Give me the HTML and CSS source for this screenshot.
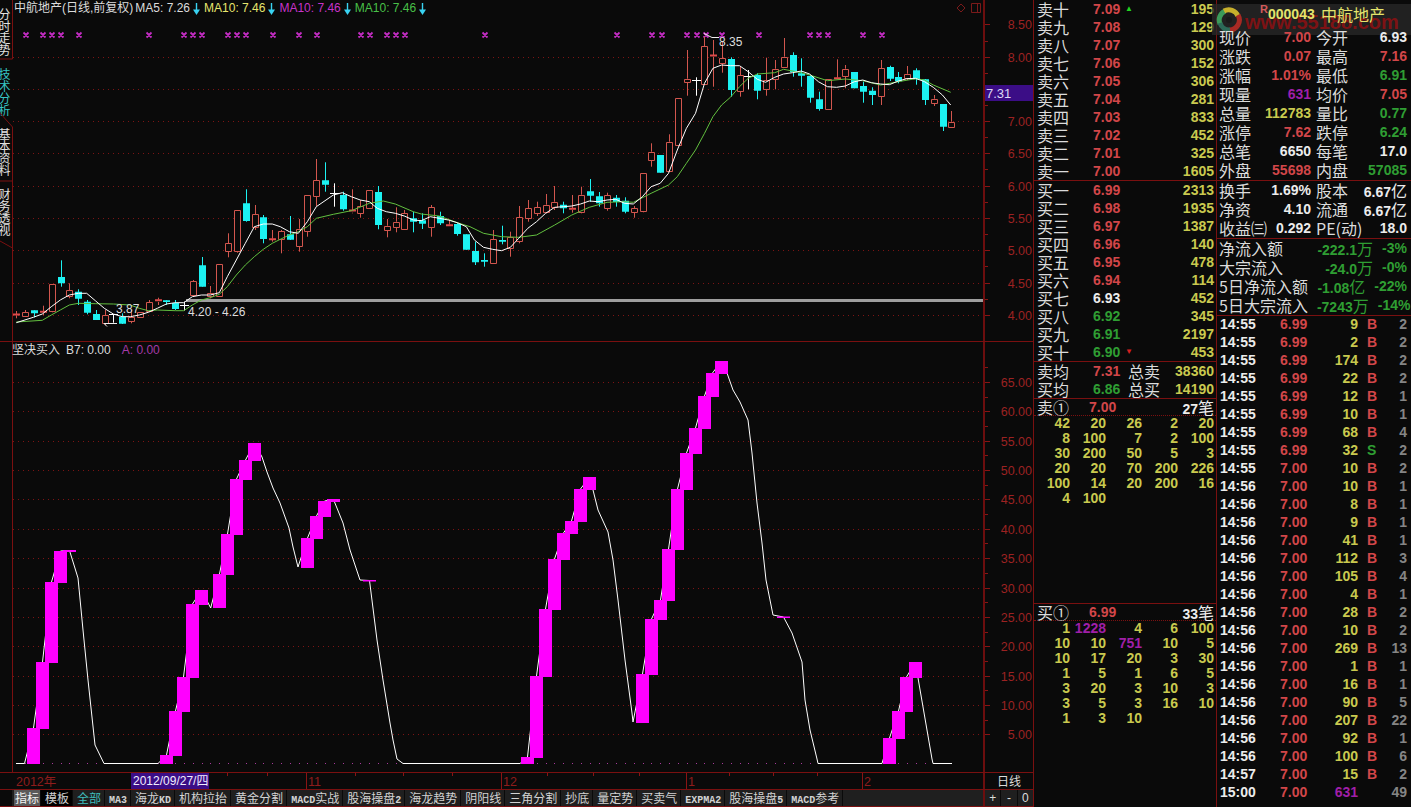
FILE: index.html
```html
<!DOCTYPE html>
<html lang="zh-CN">
<head>
<meta charset="utf-8">
<title>中航地产 日线</title>
<link rel="stylesheet" href="styles.css">
</head>
<body>
<div class="app">
  <section class="charts">
    <div class="chart-row upper">
      <nav class="side-tabs">
        <svg class="side-lines" width="13" height="341" viewBox="0 0 13 341"><path d="M12.5 0V59H0M12.5 127L0 113M12.5 127V341M12.5 181H0M12.5 248L0 241"/></svg>
        <div class="side-tab">分时走势</div>
        <div class="side-tab active">技术分析</div>
        <div class="side-tab">基本资料</div>
        <div class="side-tab">财务透视</div>
      </nav>
      <div class="plot">
        <svg id="upper-plot" class="chart-svg" width="971" height="341" viewBox="12 0 971 341">
          <text class="note" x="116" y="313">3.87</text>
          <text class="note" x="188" y="316">4.20 - 4.26</text>
          <text class="note" x="719" y="46">8.35</text>
          <path class="icon-line" d="M961 4l4 4-4 4-4-4zM971.5 3.5h9v9h-9zM977.5 3.5v9"/>
        </svg>
        <div class="legend">
          <span class="legend-title">中航地产(日线,前复权)</span>
          <span class="legend-item c-white">MA5: 7.26<svg class="down" width="7" height="13" viewBox="0 0 7 13"><path d="M3.5 1v7"/><path class="head" d="M0 7.5h7L3.5 13z"/></svg></span>
          <span class="legend-item c-yellow">MA10: 7.46<svg class="down" width="7" height="13" viewBox="0 0 7 13"><path d="M3.5 1v7"/><path class="head" d="M0 7.5h7L3.5 13z"/></svg></span>
          <span class="legend-item c-magenta">MA10: 7.46<svg class="down" width="7" height="13" viewBox="0 0 7 13"><path d="M3.5 1v7"/><path class="head" d="M0 7.5h7L3.5 13z"/></svg></span>
          <span class="legend-item c-green">MA10: 7.46<svg class="down" width="7" height="13" viewBox="0 0 7 13"><path d="M3.5 1v7"/><path class="head" d="M0 7.5h7L3.5 13z"/></svg></span>
        </div>
      </div>
      <div class="axis">
        <svg width="48" height="341" viewBox="985 0 48 341">
          <path class="tick" d="M985 24.5h5M985 57.5h5M985 89.5h5M985 121.5h5M985 153.5h5M985 186.5h5M985 218.5h5M985 250.5h5M985 283.5h5M985 315.5h5M985 41.5h3M985 73.5h3M985 105.5h3M985 137.5h3M985 169.5h3M985 202.5h3M985 234.5h3M985 266.5h3M985 299.5h3"/>
          <rect class="price-box" x="985" y="85" width="48" height="16"/>
          <text class="price-text" x="986" y="98">7.31</text>
          <text class="axis-label" x="1032" y="29">8.50</text>
          <text class="axis-label" x="1032" y="62">8.00</text>
          <text class="axis-label" x="1032" y="126">7.00</text>
          <text class="axis-label" x="1032" y="158">6.50</text>
          <text class="axis-label" x="1032" y="191">6.00</text>
          <text class="axis-label" x="1032" y="223">5.50</text>
          <text class="axis-label" x="1032" y="255">5.00</text>
          <text class="axis-label" x="1032" y="288">4.50</text>
          <text class="axis-label" x="1032" y="320">4.00</text>
        </svg>
      </div>
    </div>

    <div class="chart-row lower">
      <div class="strip"></div>
      <div class="plot plot-lower">
        <svg id="lower-plot" class="chart-svg" width="970" height="430" viewBox="13 342 970 430"></svg>
        <div class="legend legend-lower">
          <span class="legend-title">坚决买入</span>
          <span class="legend-item c-white">B7: 0.00</span>
          <span class="legend-item c-purple">A: 0.00</span>
        </div>
      </div>
      <div class="axis">
        <svg id="lower-axis" width="48" height="430" viewBox="985 342 48 430">
          <text class="axis-label" x="1032" y="387">65.00</text>
          <text class="axis-label" x="1032" y="416">60.00</text>
          <text class="axis-label" x="1032" y="446">55.00</text>
          <text class="axis-label" x="1032" y="475">50.00</text>
          <text class="axis-label" x="1032" y="504">45.00</text>
          <text class="axis-label" x="1032" y="534">40.00</text>
          <text class="axis-label" x="1032" y="563">35.00</text>
          <text class="axis-label" x="1032" y="593">30.00</text>
          <text class="axis-label" x="1032" y="622">25.00</text>
          <text class="axis-label" x="1032" y="651">20.00</text>
          <text class="axis-label" x="1032" y="681">15.00</text>
          <text class="axis-label" x="1032" y="710">10.00</text>
          <text class="axis-label" x="1032" y="739">5.00</text>
        </svg>
      </div>
    </div>

    <div class="chart-row date-row">
      <div class="strip"></div>
      <svg class="date-svg" width="971" height="16" viewBox="12 773 971 16">
        <path class="tick" d="M227.5 773v3M267.5 773v3M355.5 773v3M403.5 773v3M452.5 773v3M547.5 773v3M593.5 773v3M639.5 773v3M729.5 773v3M773.5 773v3M817.5 773v3M306.5 773v16M501.5 773v16M686.5 773v16M862.5 773v16"/>
        <rect class="price-box" x="131" y="773" width="78" height="16"/>
        <text class="date-label" x="16" y="786">2012年</text>
        <text class="date-now" x="133" y="785">2012/09/27/四</text>
        <text class="date-label" x="308" y="786">11</text>
        <text class="date-label" x="503" y="786">12</text>
        <text class="date-label" x="688" y="786">1</text>
        <text class="date-label" x="864" y="786">2</text>
      </svg>
      <div class="period">日线</div>
    </div>

    <div class="chart-row tab-row">
      <div class="strip strip-plain"></div>
      <div class="tabs">
        <span class="tab tab-on">指标</span>
        <span class="tab tab-dark">模板</span>
        <span class="tab tab-all">全部</span>
        <span class="tab"><i>MA3</i></span>
        <span class="tab">海龙<i>KD</i></span>
        <span class="tab">机构拉抬</span>
        <span class="tab">黄金分割</span>
        <span class="tab"><i>MACD</i>实战</span>
        <span class="tab">股海操盘<i>2</i></span>
        <span class="tab">海龙趋势</span>
        <span class="tab">阴阳线</span>
        <span class="tab">三角分割</span>
        <span class="tab">抄底</span>
        <span class="tab">量定势</span>
        <span class="tab">买卖气</span>
        <span class="tab"><i>EXPMA2</i></span>
        <span class="tab">股海操盘<i>5</i></span>
        <span class="tab"><i>MACD</i>参考</span>
      </div>
      <div class="zoom-btns"><span>+</span><span>-</span><span>0</span></div>
    </div>
  </section>

  <section class="book">
    <div class="book-block">
      <div class="book-row"><span class="zh">卖十</span><b class="r">7.09</b><span class="mark up">▲</span><b class="y num">195</b></div>
      <div class="book-row"><span class="zh">卖九</span><b class="r">7.08</b><span></span><b class="y num">129</b></div>
      <div class="book-row"><span class="zh">卖八</span><b class="r">7.07</b><span></span><b class="y num">300</b></div>
      <div class="book-row"><span class="zh">卖七</span><b class="r">7.06</b><span></span><b class="y num">152</b></div>
      <div class="book-row"><span class="zh">卖六</span><b class="r">7.05</b><span></span><b class="y num">306</b></div>
      <div class="book-row"><span class="zh">卖五</span><b class="r">7.04</b><span></span><b class="y num">281</b></div>
      <div class="book-row"><span class="zh">卖四</span><b class="r">7.03</b><span></span><b class="y num">833</b></div>
      <div class="book-row"><span class="zh">卖三</span><b class="r">7.02</b><span></span><b class="y num">452</b></div>
      <div class="book-row"><span class="zh">卖二</span><b class="r">7.01</b><span></span><b class="y num">325</b></div>
      <div class="book-row"><span class="zh">卖一</span><b class="r">7.00</b><span></span><b class="y num">1605</b></div>
    </div>
    <div class="book-block">
      <div class="book-row"><span class="zh">买一</span><b class="r">6.99</b><span></span><b class="y num">2313</b></div>
      <div class="book-row"><span class="zh">买二</span><b class="r">6.98</b><span></span><b class="y num">1935</b></div>
      <div class="book-row"><span class="zh">买三</span><b class="r">6.97</b><span></span><b class="y num">1387</b></div>
      <div class="book-row"><span class="zh">买四</span><b class="r">6.96</b><span></span><b class="y num">140</b></div>
      <div class="book-row"><span class="zh">买五</span><b class="r">6.95</b><span></span><b class="y num">478</b></div>
      <div class="book-row"><span class="zh">买六</span><b class="r">6.94</b><span></span><b class="y num">114</b></div>
      <div class="book-row"><span class="zh">买七</span><b class="w">6.93</b><span></span><b class="y num">452</b></div>
      <div class="book-row"><span class="zh">买八</span><b class="g">6.92</b><span></span><b class="y num">345</b></div>
      <div class="book-row"><span class="zh">买九</span><b class="g">6.91</b><span></span><b class="y num">2197</b></div>
      <div class="book-row"><span class="zh">买十</span><b class="g">6.90</b><span class="mark dn">▼</span><b class="y num">453</b></div>
    </div>
    <div class="book-block">
      <div class="avg-row"><span class="zh">卖均</span><b class="r">7.31</b><span class="zh">总卖</span><b class="y num">38360</b></div>
      <div class="avg-row"><span class="zh">买均</span><b class="g">6.86</b><span class="zh">总买</span><b class="y num">14190</b></div>
    </div>
    <div class="queue queue-sell">
      <div class="queue-head"><span class="zh">卖①</span><b class="r">7.00</b><b class="w num">27<span class="zh">笔</span></b></div>
      <div class="queue-grid y">
        <b>42</b><b>20</b><b>26</b><b>2</b><b>20</b>
        <b>8</b><b>100</b><b>7</b><b>2</b><b>100</b>
        <b>30</b><b>200</b><b>50</b><b>5</b><b>3</b>
        <b>20</b><b>20</b><b>70</b><b>200</b><b>226</b>
        <b>100</b><b>14</b><b>20</b><b>200</b><b>16</b>
        <b>4</b><b>100</b>
      </div>
    </div>
    <div class="queue queue-buy">
      <div class="queue-head"><span class="zh">买①</span><b class="r">6.99</b><b class="w num">33<span class="zh">笔</span></b></div>
      <div class="queue-grid y">
        <b>1</b><b class="p">1228</b><b>4</b><b>6</b><b>100</b>
        <b>10</b><b>10</b><b class="p">751</b><b>10</b><b>5</b>
        <b>10</b><b>17</b><b>20</b><b>3</b><b>30</b>
        <b>1</b><b>5</b><b>1</b><b>6</b><b>5</b>
        <b>3</b><b>20</b><b>3</b><b>10</b><b>3</b>
        <b>3</b><b>5</b><b>3</b><b>16</b><b>10</b>
        <b>1</b><b>3</b><b>10</b>
      </div>
    </div>
  </section>

  <section class="quote">
    <div class="watermark">
      <svg class="logo" width="26" height="26" viewBox="0 0 26 26"><path class="logo-g" d="M4 17A10 10 0 0 1 9 4"/><path class="logo-y" d="M8 4A10 10 0 0 1 22 9"/><path class="logo-r" d="M22 8A10 10 0 0 1 13 23"/><path class="logo-g2" d="M14 23A10 10 0 0 1 4 16"/><circle class="logo-c" cx="13" cy="13" r="3"/></svg>
      <span class="mark-text">www.55188.com</span>
    </div>
    <div class="quote-head"><span class="r-flag">R</span><b class="code">000043</b><span class="zh name">中航地产</span></div>
    <div class="quote-block">
      <div class="q-row"><span class="zh">现价</span><b class="r">7.00</b><span class="zh">今开</span><b class="w">6.93</b></div>
      <div class="q-row"><span class="zh">涨跌</span><b class="r">0.07</b><span class="zh">最高</span><b class="r">7.16</b></div>
      <div class="q-row"><span class="zh">涨幅</span><b class="r">1.01%</b><span class="zh">最低</span><b class="g">6.91</b></div>
      <div class="q-row"><span class="zh">现量</span><b class="p">631</b><span class="zh">均价</span><b class="r">7.05</b></div>
      <div class="q-row"><span class="zh">总量</span><b class="y">112783</b><span class="zh">量比</span><b class="g">0.77</b></div>
      <div class="q-row"><span class="zh">涨停</span><b class="r">7.62</b><span class="zh">跌停</span><b class="g">6.24</b></div>
      <div class="q-row"><span class="zh">总笔</span><b class="w">6650</b><span class="zh">每笔</span><b class="w">17.0</b></div>
      <div class="q-row"><span class="zh">外盘</span><b class="r">55698</b><span class="zh">内盘</span><b class="g">57085</b></div>
    </div>
    <div class="quote-block">
      <div class="q-row"><span class="zh">换手</span><b class="w">1.69%</b><span class="zh">股本</span><b class="w">6.67<span class="zh">亿</span></b></div>
      <div class="q-row"><span class="zh">净资</span><b class="w">4.10</b><span class="zh">流通</span><b class="w">6.67<span class="zh">亿</span></b></div>
      <div class="q-row"><span class="zh">收益㈢</span><b class="w">0.292</b><span class="zh">PE(动)</span><b class="w">18.0</b></div>
    </div>
    <div class="quote-block">
      <div class="flow-row"><span class="zh">净流入额</span><b class="g">-222.1<span class="zh">万</span></b><b class="g">-3%</b></div>
      <div class="flow-row"><span class="zh">大宗流入</span><b class="g">-24.0<span class="zh">万</span></b><b class="g">-0%</b></div>
      <div class="flow-row"><span class="zh">5日净流入额</span><b class="g">-1.08<span class="zh">亿</span></b><b class="g">-22%</b></div>
      <div class="flow-row"><span class="zh">5日大宗流入</span><b class="g">-7243<span class="zh">万</span></b><b class="g">-14%</b></div>
    </div>
    <div class="trades">
      <div class="t-row"><b class="w">14:55</b><b class="r">6.99</b><b class="y num">9</b><b class="r side">B</b><b class="n num">2</b></div>
      <div class="t-row"><b class="w">14:55</b><b class="r">6.99</b><b class="y num">2</b><b class="r side">B</b><b class="n num">2</b></div>
      <div class="t-row"><b class="w">14:55</b><b class="r">6.99</b><b class="y num">174</b><b class="r side">B</b><b class="n num">2</b></div>
      <div class="t-row"><b class="w">14:55</b><b class="r">6.99</b><b class="y num">22</b><b class="r side">B</b><b class="n num">2</b></div>
      <div class="t-row"><b class="w">14:55</b><b class="r">6.99</b><b class="y num">12</b><b class="r side">B</b><b class="n num">1</b></div>
      <div class="t-row"><b class="w">14:55</b><b class="r">6.99</b><b class="y num">10</b><b class="r side">B</b><b class="n num">1</b></div>
      <div class="t-row"><b class="w">14:55</b><b class="r">6.99</b><b class="y num">68</b><b class="r side">B</b><b class="n num">4</b></div>
      <div class="t-row"><b class="w">14:55</b><b class="r">6.99</b><b class="y num">32</b><b class="g side">S</b><b class="n num">2</b></div>
      <div class="t-row"><b class="w">14:55</b><b class="r">7.00</b><b class="y num">10</b><b class="r side">B</b><b class="n num">2</b></div>
      <div class="t-row"><b class="w">14:56</b><b class="r">7.00</b><b class="y num">10</b><b class="r side">B</b><b class="n num">1</b></div>
      <div class="t-row"><b class="w">14:56</b><b class="r">7.00</b><b class="y num">8</b><b class="r side">B</b><b class="n num">1</b></div>
      <div class="t-row"><b class="w">14:56</b><b class="r">7.00</b><b class="y num">9</b><b class="r side">B</b><b class="n num">1</b></div>
      <div class="t-row"><b class="w">14:56</b><b class="r">7.00</b><b class="y num">41</b><b class="r side">B</b><b class="n num">1</b></div>
      <div class="t-row"><b class="w">14:56</b><b class="r">7.00</b><b class="y num">112</b><b class="r side">B</b><b class="n num">3</b></div>
      <div class="t-row"><b class="w">14:56</b><b class="r">7.00</b><b class="y num">105</b><b class="r side">B</b><b class="n num">4</b></div>
      <div class="t-row"><b class="w">14:56</b><b class="r">7.00</b><b class="y num">4</b><b class="r side">B</b><b class="n num">1</b></div>
      <div class="t-row"><b class="w">14:56</b><b class="r">7.00</b><b class="y num">28</b><b class="r side">B</b><b class="n num">2</b></div>
      <div class="t-row"><b class="w">14:56</b><b class="r">7.00</b><b class="y num">10</b><b class="r side">B</b><b class="n num">2</b></div>
      <div class="t-row"><b class="w">14:56</b><b class="r">7.00</b><b class="y num">269</b><b class="r side">B</b><b class="n num">13</b></div>
      <div class="t-row"><b class="w">14:56</b><b class="r">7.00</b><b class="y num">1</b><b class="r side">B</b><b class="n num">1</b></div>
      <div class="t-row"><b class="w">14:56</b><b class="r">7.00</b><b class="y num">16</b><b class="r side">B</b><b class="n num">1</b></div>
      <div class="t-row"><b class="w">14:56</b><b class="r">7.00</b><b class="y num">90</b><b class="r side">B</b><b class="n num">5</b></div>
      <div class="t-row"><b class="w">14:56</b><b class="r">7.00</b><b class="y num">207</b><b class="r side">B</b><b class="n num">22</b></div>
      <div class="t-row"><b class="w">14:56</b><b class="r">7.00</b><b class="y num">92</b><b class="r side">B</b><b class="n num">1</b></div>
      <div class="t-row"><b class="w">14:56</b><b class="r">7.00</b><b class="y num">100</b><b class="r side">B</b><b class="n num">6</b></div>
      <div class="t-row"><b class="w">14:57</b><b class="r">7.00</b><b class="y num">15</b><b class="r side">B</b><b class="n num">2</b></div>
      <div class="t-row"><b class="w">15:00</b><b class="r">7.00</b><b class="p num">631</b><b class="side"></b><b class="n num">49</b></div>
    </div>
  </section>
</div>
<script src="chart.js"></script>
</body>
</html>
```
FILE: styles.css
```css
* { box-sizing: border-box; }
html, body { margin: 0; height: 100%; background: #0a0a0a; overflow: hidden; }
body {
  font-family: "Liberation Sans", "Noto Sans CJK SC", sans-serif;
  color: #e4e4e4;
  font-size: 14px;
}
b { font-weight: 700; }
.app {
  display: grid;
  grid-template-columns: 1033px 184px 194px;
  width: 1411px;
  height: 807px;
}

/* colours */
.r { color: #d24649; }
.y { color: #c9c94f; }
.g { color: #2f9e33; }
.w { color: #ececec; }
.p { color: #a01fa8; }
.n { color: #858585; }
.c-white { color: #dcdcdc; }
.c-yellow { color: #e6e66e; }
.c-magenta { color: #c733c9; }
.c-green { color: #48c048; }
.c-purple { color: #a43aa8; }
.zh {
  font-family: "Noto Sans CJK SC", sans-serif;
  font-size: 16px;
  font-weight: 400;
  color: #dcdcdc;
}
b .zh { color: inherit; }
.num { text-align: right; }

/* chart column */
.chart-row { display: grid; grid-template-columns: 12px 971px 50px; }
.upper { height: 341px; }
.lower { height: 432px; border-top: 1px solid #7a1010; border-bottom: 1px solid #7a1010; }
.date-row { height: 17px; border-bottom: 1px solid #7a1010; }
.tab-row { height: 17px; border-bottom: 1px solid #7a1010; }
.plot { position: relative; }
.plot-lower { border-left: 1px solid #7a1010; }
.chart-svg { display: block; }
.axis { border-left: 2px solid #6c0e0e; }
.axis svg { display: block; }

/* side tabs */
.side-tabs {
  position: relative;
  display: flex;
  flex-direction: column;
  gap: 12px;
  padding-top: 8px;
  overflow: visible;
}
.side-lines { position: absolute; left: 0; top: 0; }
.side-lines path { fill: none; stroke: #7a1010; stroke-width: 1; }
.side-tab {
  height: 48px;
  width: 12px;
  margin-left: -2px;
  font-size: 12px;
  line-height: 12px;
  writing-mode: vertical-rl;
  font-family: "Noto Sans CJK SC", sans-serif;
  color: #e2e2e2;
}
.side-tab.active { color: #36c5c5; }

/* legends */
.legend {
  position: absolute;
  left: 2px;
  top: 0;
  display: flex;
  gap: 4px;
  font-size: 12px;
  line-height: 16px;
  white-space: nowrap;
}
.legend-title { margin-right: -2px; color: #dcdcdc; }
.legend-item { display: inline-flex; }
.legend-lower { left: -1px; top: 0; gap: 7px; }
.legend-lower .legend-title { margin-right: -1px; }
.legend-lower .c-purple { margin-left: 4px; }
.down { margin: 2px 0 0 3px; }
.down path { fill: none; stroke: #39d3f2; stroke-width: 1.4; }
.down .head { fill: #39d3f2; stroke: none; }

/* svg parts */
.grid-line { stroke: #7d1414; stroke-width: 1; stroke-dasharray: 1 4; fill: none; }
.tick { stroke: #8a1414; stroke-width: 1; fill: none; }
.icon-line { stroke: #7a1a1a; stroke-width: 1; fill: none; }
.axis-label { font-size: 12.5px; fill: #9c2222; text-anchor: end; }
.price-box { fill: #3b0d86; }
.price-text { font-size: 13px; fill: #dcd8f4; }
.note { font-size: 12px; fill: #dddddd; }
.date-label { font-size: 12.5px; fill: #8e1c1c; }
.date-now { font-size: 12px; fill: #f0eeff; }
.candle-r { fill: #0a0a0a; stroke: #d2564e; stroke-width: 1; }
.wick-r { fill: none; stroke: #d2564e; stroke-width: 1; }
.solid-r { fill: #e04a4a; }
.candle-c { fill: #1cf2f2; }
.wick-c { fill: none; stroke: #1cf2f2; stroke-width: 1; }
.wick-w { fill: none; stroke: #ffffff; stroke-width: 1; }
.ma5 { fill: none; stroke: #ffffff; stroke-width: 1; stroke-linejoin: round; }
.ma10 { fill: none; stroke: #62bf3f; stroke-width: 1; stroke-linejoin: round; }
.level { fill: #9e9e9e; }
.mark-x { fill: none; stroke: #c22cc2; stroke-width: 1.8; }
.pointer { fill: none; stroke: #f0f0f0; stroke-width: 1; }
.bar { fill: #ff00ff; }
.flat-dot { fill: #a83a9c; }
.osc { fill: none; stroke: #ffffff; stroke-width: 1; stroke-linejoin: round; }

/* date row */
.date-svg { display: block; }
.period {
  border-left: 2px solid #6c0e0e;
  text-align: center;
  font-family: "Noto Sans CJK SC", sans-serif;
  font-size: 12px;
  line-height: 16px;
  color: #dcdcdc;
}

/* tab row */
.tabs { display: flex; background: #1f1f1f; padding-left: 2px; overflow: hidden; }
.tab {
  padding: 0 3px 0 4px;
  border-right: 1px solid #0a0a0a;
  font-family: "Noto Sans CJK SC", sans-serif;
  font-size: 12px;
  line-height: 16px;
  color: #d2d2d2;
  white-space: nowrap;
}
.tab i { font-family: "Liberation Mono", monospace; font-style: normal; font-weight: 700; font-size: 10px; }
.tab-on { background: #5a5a5a; color: #f2f2f2; padding: 0 1px; }
.tab-dark { background: #000; }
.tab-all { color: #3fbcbc; }
.zoom-btns { display: flex; gap: 1px; border-left: 2px solid #6c0e0e; background: #0a0a0a; }
.zoom-btns span { flex: 1; background: #1f1f1f; text-align: center; font-size: 12px; line-height: 16px; color: #dcdcdc; }

/* order book */
.book { display: flex; flex-direction: column; border-left: 1px solid #7a1010; border-right: 1px solid #7a1010; height: 807px; }
.book-block { border-bottom: 1px solid #7a1010; }
.book-row, .avg-row { display: grid; height: 18px; line-height: 18px; padding: 0 2px 0 3px; }
.book-row { grid-template-columns: 56px 32px 12px 1fr; }
.avg-row { grid-template-columns: 56px 35px 32px 1fr; }
.mark { font-size: 8px; line-height: 17px; }
.up { color: #22d422; }
.dn { color: #d62020; }
.queue { display: flex; flex-direction: column; }
.queue-sell { height: 205px; border-bottom: 1px solid #7a1010; }
.queue-buy { flex: 1; }
.queue-head {
  display: grid;
  grid-template-columns: 52px 1fr auto;
  height: 17px;
  line-height: 16px;
  padding: 0 2px 0 3px;
  border-bottom: 1px dotted #7a1010;
}
.queue-grid {
  display: grid;
  grid-template-columns: repeat(5, 36px);
  grid-auto-rows: 15px;
  line-height: 15px;
  text-align: right;
}

/* quote panel */
.quote { position: relative; display: flex; flex-direction: column; height: 807px; }
.watermark {
  position: absolute;
  left: -5px;
  right: 0;
  top: 4px;
  height: 31px;
  background: rgba(42, 42, 42, 0.75);
  display: flex;
  align-items: center;
  gap: 3px;
  padding: 0 0 0 4px;
}
.logo { flex: none; }
.logo path { fill: none; stroke-width: 5; }
.logo-g { stroke: #3c9a5a; }
.logo-y { stroke: #c8b02c; }
.logo-r { stroke: #a82a24; }
.logo-g2 { stroke: #2c6a58; }
.logo-c { fill: #1a1a1a; }
.mark-text { font-size: 20px; font-weight: 700; color: #7e1214; line-height: 31px; padding-top: 5px; white-space: nowrap; }
.quote-head, .quote-block, .trades { position: relative; }
.quote-head { height: 28px; display: flex; line-height: 28px; padding-left: 43px; }
.r-flag { font-size: 11px; font-weight: 700; color: #d25a5a; line-height: 18px; width: 8px; }
.code { color: #e4e46c; width: 53px; }
.zh.name { color: #e4e46c; }
.quote-block { border-bottom: 1px solid #7a1010; }
.q-row {
  display: grid;
  grid-template-columns: 34px 58px 5px 33px 58px;
  height: 19px;
  line-height: 19px;
  padding-left: 2px;
  white-space: nowrap;
}
.q-row .zh:nth-child(3) { grid-column: 4; }
.q-row b { text-align: right; }
.flow-row {
  display: grid;
  grid-template-columns: 1fr auto auto;
  column-gap: 9px;
  height: 19px;
  line-height: 19px;
  padding: 0 4px 0 2px;
  white-space: nowrap;
}
.t-row {
  display: grid;
  grid-template-columns: 60px 27px 51px 9px 14px 26px;
  height: 18px;
  line-height: 16px;
  padding-left: 3px;
}
.t-row .side { grid-column: 5; }
```
FILE: chart.js
```js
// Daily candles, moving averages and the oscillator, drawn from sampled chart data.
var NS = 'http://www.w3.org/2000/svg';
function add(svg, before, tag, cls, attrs) {
  var el = document.createElementNS(NS, tag);
  el.setAttribute('class', cls);
  for (var k in attrs) el.setAttribute(k, attrs[k]);
  svg.insertBefore(el, before);
}

var upper = document.getElementById('upper-plot');
var lower = document.getElementById('lower-plot');
var lowerAxis = document.getElementById('lower-axis');

// y values sampled at 3x scale: [kind, wickTop, bodyTop, bodyBottom, wickBottom]
var candles = [
['r',933,942,946,955],['r',930,937,947,950],['c',931,931,940,952],['r',917,934,940,945],['r',853,853,933,937],
['c',781,831,850,860],['r',850,871,888,895],['c',868,875,896,915],['c',900,905,938,943],['c',930,942,960,960],
['r',930,946,968,975],['w',942,942,942,968],['c',940,950,971,972],['r',930,950,963,970],['r',936,936,950,950],
['r',900,907,932,932],['r',893,899,906,915],['c',901,901,906,915],['c',900,909,927,930],['w',905,915,915,932],
['r',840,844,885,890],['c',771,796,860,860],['r',858,878,887,895],['r',793,793,887,887],['r',700,730,752,772],
['r',631,631,752,758],['c',568,610,663,665],['r',615,643,682,690],['c',645,652,717,730],['r',690,716,720,725],
['r',690,694,716,760],['c',648,703,719,720],['r',657,686,737,755],['r',584,584,694,710],['r',477,541,589,618],
['c',487,541,554,575],['w',550,578,578,620],['c',575,585,628,632],['r',568,630,638,640],['r',600,618,640,653],
['r',571,571,623,623],['c',558,576,675,688],['r',657,677,691,712],['r',622,665,682,697],['r',630,640,686,687],
['c',635,655,665,697],['c',640,661,671,687],['r',615,622,680,710],['c',635,648,670,675],['r',660,674,677,678],
['c',668,672,702,707],['c',703,703,749,749],['c',725,753,787,795],['c',760,780,785,800],['r',690,718,790,792],
['c',677,720,725,733],['r',695,712,745,770],['r',618,652,722,730],['r',600,625,655,665],['r',605,622,638,648],
['r',582,614,635,640],['r',558,605,622,630],['c',605,614,625,640],['r',585,625,630,638],['r',560,584,635,640],
['c',537,574,587,605],['c',576,589,610,620],['r',578,586,623,632],['c',585,593,606,620],['c',592,602,635,640],
['r',618,625,636,653],['r',518,518,632,637],['r',430,455,480,500],['c',465,465,518,518],['r',403,425,512,515],
['r',295,295,434,434],['r',150,236,247,287],['w',232,240,240,287],['r',110,139,253,255],['r',120,165,170,260],
['r',125,175,190,218],['c',172,177,270,290],['r',200,226,272,290],['w',210,228,228,268],['c',220,225,272,298],
['r',173,240,268,287],['r',180,206,238,268],['r',114,170,200,200],['c',157,165,217,230],['c',175,220,227,260],
['c',225,228,293,308],['c',275,298,327,332],['r',238,238,328,328],['r',178,233,240,240],['r',195,206,228,265],
['c',216,216,265,265],['c',245,258,275,308],['c',262,272,285,315],['r',180,205,288,315],['c',197,201,236,243],
['c',216,231,244,250],['r',198,221,235,240],['c',205,211,238,254],['c',237,238,300,315],['r',285,296,309,318],
['c',312,312,380,393],['r',333,365,380,383]
];

function cx(i) { return 16.4 + 8.82 * i; }
function px(v) { return (v / 3).toFixed(1); }

// grid
var gridD = '';
[57.5, 89.5, 121.5, 153.5, 186.5, 218.5, 250.5, 283.5, 315.5].forEach(function (y) { gridD += 'M13 ' + y + 'H982'; });
var lowGrid = '', lowTicks = '';
for (var n = 0; n < 13; n++) {
  var gy = Math.round(382 + 29.36 * n) + 0.5;
  lowGrid += 'M13 ' + gy + 'H982';
  lowTicks += 'M985 ' + gy + 'h5';
  lowTicks += 'M985 ' + (Math.round(382 + 29.36 * n - 14.7) + 0.5) + 'h3';
}

var wickR = '', wickC = '', wickW = '', bodyR = '', bodyC = '', solidR = '';
candles.forEach(function (c, i) {
  var x = Math.round(cx(i)), w1 = +px(c[1]), t = +px(c[2]), b = +px(c[3]), w2 = +px(c[4]);
  var m = x + 0.5;
  if (c[0] === 'r') {
    if (w1 < t) wickR += 'M' + m + ' ' + w1 + 'V' + t;
    if (w2 > b) wickR += 'M' + m + ' ' + b + 'V' + w2;
    if (b - t < 3) solidR += 'M' + (x - 3) + ' ' + (t - 0.5) + 'h7v2h-7z';
    else bodyR += 'M' + (x - 2.5) + ' ' + Math.round(t) + '.5h6V' + Math.round(b) + '.5h-6z';
  } else if (c[0] === 'c') {
    wickC += 'M' + m + ' ' + w1 + 'V' + w2;
    bodyC += 'M' + (x - 3) + ' ' + t + 'h7V' + b + 'h-7z';
  } else {
    wickW += 'M' + m + ' ' + w1 + 'V' + w2;
    wickW += 'M' + (x - 4) + ' ' + (Math.round(t) + 0.5) + 'h9';
  }
});

var ma5Left = [[49,968],[100,952],[127,942],[154,920],[181,900],[208,885],[235,880],[260,880],[287,903],[313,925],[340,942],[367,950],[391,950],[418,945],[445,937],[472,925],[499,912],[526,908],[551,908],[577,890],[604,885],[631,885],[658,878],[682,830],[709,780],[736,730],[763,680],[790,672],[817,672],[841,680],[868,695],[895,700],[922,665],[949,620],[1000,585],[1027,578],[1054,590],[1081,600],[1108,605],[1132,625],[1159,635],[1186,640],[1213,648],[1240,660],[1264,662],[1291,650],[1318,655],[1345,660],[1372,668],[1399,680]];
var ma5Right = [[12,720],[37,742],[62,748],[87,752],[111,742],[134,715],[159,685],[183,665],[208,640],[233,622],[257,620],[280,618],[304,612],[328,603],[352,605],[377,600],[401,598],[425,610],[449,612],[474,590],[498,560],[523,550],[546,520],[570,450],[595,385],[620,340],[645,250],[668,205],[692,195],[716,197],[741,197],[765,215],[790,238],[813,247],[838,232],[862,222],[887,218],[911,213],[934,222],[958,245],[983,260],[1008,262],[1032,258],[1057,245],[1080,240],[1104,248],[1129,252],[1153,254],[1178,243],[1201,236],[1225,235],[1250,245],[1274,262],[1299,285],[1322,315]];
var ma10Left = [[49,966],[127,961],[154,945],[181,930],[208,915],[235,910],[287,911],[340,912],[391,915],[418,925],[445,932],[472,930],[526,932],[551,932],[577,915],[604,900],[631,893],[658,883],[682,860],[709,825],[736,795],[763,770],[790,748],[817,730],[841,718],[868,705],[895,695],[922,680],[949,655],[1000,643],[1054,632],[1108,610],[1150,603],[1186,612],[1240,635],[1264,642],[1318,648],[1372,668]];
var ma10Right = [[0,680],[37,700],[87,710],[134,712],[183,705],[233,675],[280,645],[328,622],[377,607],[425,605],[449,607],[498,580],[546,555],[570,530],[595,490],[620,450],[645,400],[668,350],[692,315],[716,292],[741,260],[765,235],[790,222],[838,218],[862,208],[911,218],[934,225],[983,242],[1032,237],[1080,242],[1129,255],[1178,245],[1225,236],[1250,240],[1274,255],[1322,277]];

function line(left, right) {
  var pts = left.map(function (p) { return (p[0] / 3).toFixed(1) + ',' + px(p[1]); });
  right.forEach(function (p) { pts.push((p[0] / 2.75 + 470).toFixed(1) + ',' + px(p[1])); });
  return 'M' + pts.join('L');
}

var marksFull = [78,128,155,184,237,447,553,580,606,685,712,739,819,898,951,1082,1109,1161,1188,1215].map(function (v) { return v / 3; })
  .concat([40,403,500,527,598,623,648,693,794,936,961,985,1081,1132].map(function (v) { return v / 2.75 + 470; }));
var marksD = '';
marksFull.forEach(function (x) {
  var r = Math.round(x);
  marksD += 'M' + (r - 2.5) + ' 32.5L' + (r + 2.5) + ' 37.5M' + (r + 2.5) + ' 32.5L' + (r - 2.5) + ' 37.5';
});

// Inserted before the first note so that the notes in the markup stay on top.
var firstNote = upper.firstElementChild;
add(upper, firstNote, 'path', 'grid-line', { d: gridD });
add(upper, firstNote, 'path', 'mark-x', { d: marksD });
add(upper, firstNote, 'path', 'wick-r', { d: wickR });
add(upper, firstNote, 'path', 'candle-r', { d: bodyR });
add(upper, firstNote, 'path', 'solid-r', { d: solidR });
add(upper, firstNote, 'path', 'wick-c', { d: wickC });
add(upper, firstNote, 'path', 'candle-c', { d: bodyC });
add(upper, firstNote, 'path', 'wick-w', { d: wickW });
add(upper, firstNote, 'rect', 'level', { x: 186, y: 299, width: 797, height: 3 });
add(upper, firstNote, 'path', 'ma10', { d: line(ma10Left, ma10Right) });
add(upper, firstNote, 'path', 'ma5', { d: line(ma5Left, ma5Right) });
add(upper, firstNote, 'path', 'pointer', { d: 'M117 323.5H104l3 3M704 33.5l8 4h7' });

// lower pane: x, top, bottom of each 13px bar
var bars = [
[27,728,764],[36,662,729],[45,582,663],[54,551,583],[63,550,552],
[160,755,764],[169,711,756],[177,677,712],[186,604,678],[195,590,605],[213,574,608],[221,534,575],[230,479,535],[239,460,480],[248,443,461],
[301,538,568],[310,516,539],[318,501,517],[327,499,502],[363,580,581.5],
[521,757,764],[530,676,758],[539,609,677],[548,559,610],[557,533,560],[565,521,534],[574,489,522],[583,477,490],
[636,674,723],[645,619,675],[654,600,620],[662,549,601],[671,489,550],[680,453,490],[689,428,454],[698,396,429],[706,373,397],[715,361,374],
[777,616.5,618],[883,738,764],[892,711,739],[900,677,712],[909,662,678]
];
var osc = [[16,763.5],[24.5,763.5],[33.5,728],[42.5,662],[51.5,582],[60.5,551],[69.5,550.5],[78,578],[83,630],[88,680],[95,745],[104,763.5],[158,763.5],[166.5,755],[175.5,711],[183.5,677],[192.5,604],[201.5,590],[210.7,608],[219.5,574],[227.5,534],[236.5,479],[245.5,460],[254.5,443],[262,457],[267,472],[273,488],[280,503],[289,528],[293,547],[298,567],[307.5,538],[316.5,516],[324.5,501],[333.5,499.5],[343,523],[350,550],[360,580],[369.5,580.5],[377,640],[383,680],[390,723],[393,740],[397,759],[403,763.5],[520,763.5],[527.5,757],[536.5,676],[545.5,609],[554.5,559],[563.5,533],[571.5,521],[580.5,489],[589.5,477],[593,490],[598,510],[608,532],[613,560],[618,600],[625,660],[632,713],[633,722],[642.5,674],[651.5,619],[660.5,600],[668.5,549],[677.5,489],[686.5,453],[695.5,428],[704.5,396],[712.5,373],[721.5,361],[727,373],[733,390],[740,402],[748,420],[752,453],[757,503],[762,543],[766,580],[773,615],[783.5,617],[792,633],[802,662],[805,700],[810,730],[817,759],[818,763.5],[882,763.5],[889.5,738],[898.5,711],[906.5,677],[915.5,662],[918,678],[932,759],[933,763.5],[952,763.5]];

add(lower, null, 'path', 'grid-line', { d: lowGrid });
for (var d = 0; d < 107; d++) add(lower, null, 'rect', 'flat-dot', { x: Math.round(cx(d)), y: 763, width: 1, height: 1 });
add(lower, null, 'path', 'osc', { d: 'M' + osc.map(function (p) { return p.join(','); }).join('L') });
bars.forEach(function (b) { add(lower, null, 'rect', 'bar', { x: b[0], y: b[1], width: 13, height: b[2] - b[1] }); });
add(lowerAxis, lowerAxis.firstElementChild, 'path', 'tick', { d: lowTicks });
```
